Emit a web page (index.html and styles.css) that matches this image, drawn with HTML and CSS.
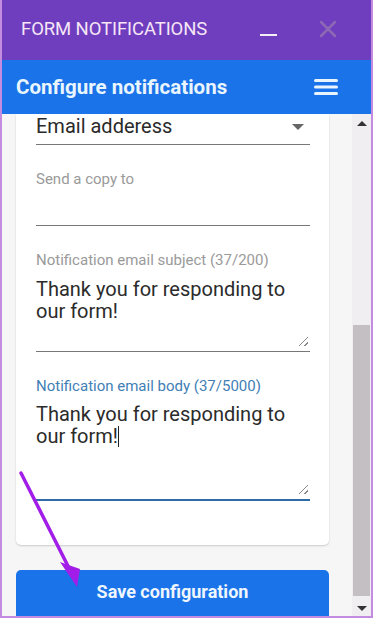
FILE: index.html
```html
<!DOCTYPE html>
<html lang="en">
<head>
  <meta charset="UTF-8" />
  <meta name="viewport" content="width=device-width, initial-scale=1" />
  <title>Form Notifications</title>
  <link rel="stylesheet" href="styles.css">
</head>
<body>
  <div class="window">
    <!-- Dialog title bar -->
    <div class="titlebar">
      <span class="title">FORM NOTIFICATIONS</span>
      <span class="minimize"></span>
      <svg class="close" width="18" height="18" viewBox="0 0 18 18">
        <path d="M2 2 L16 16 M16 2 L2 16" stroke="#8d68b4" stroke-width="2.5" stroke-linecap="round" />
      </svg>
    </div>

    <div class="appbar">
      <h1>Configure notifications</h1>
      <svg class="menu" width="24" height="18" viewBox="0 0 24 18">
        <rect x="0" y="1" width="24" height="3" rx="1.5" fill="#eaf4ff" />
        <rect x="0" y="7.5" width="24" height="3" rx="1.5" fill="#eaf4ff" />
        <rect x="0" y="14" width="24" height="3" rx="1.5" fill="#eaf4ff" />
      </svg>
    </div>

    <div class="main">
      <div class="pane">
        <div class="card">
          <div class="select">
            <span>Email adderess</span>
            <span class="caret-down"></span>
          </div>

          <div class="field">
            <label>Send a copy to</label>
            <div class="input"></div>
          </div>

          <div class="field">
            <label>Notification email subject (37/200)</label>
            <div class="textarea">
              Thank you for responding to our form!
              <span class="grip"></span>
            </div>
          </div>

          <div class="field focused">
            <label>Notification email body (37/5000)</label>
            <div class="textarea tall">
              Thank you for responding to our form!<span class="cursor"></span>
              <span class="grip"></span>
            </div>
          </div>
        </div>

        <button class="save">Save configuration</button>
      </div>

      <div class="scrollbar">
        <span class="arrow up"></span>
        <div class="track"><div class="thumb"></div></div>
        <span class="arrow down"></span>
      </div>
    </div>

    <!-- annotation arrow drawn over the dialog -->
    <svg class="pointer" width="100" height="140" viewBox="0 0 100 140">
      <path d="M21 23 L72 124" stroke="#a21ee8" stroke-width="3.5" stroke-linecap="round" />
      <polygon points="62,114 82,121 79,139" fill="#a21ee8" transform="translate(-2,-2)" />
    </svg>
  </div>
</body>
</html>
```

FILE: styles.css
```css
* {
  box-sizing: border-box;
}

body {
  margin: 0;
  font-family: Roboto, "Liberation Sans", Arial, sans-serif;
}

.window {
  position: relative;
  height: 618px;
  border: 2px solid #c38ce0;
  border-top: none;
  display: flex;
  flex-direction: column;
  overflow: hidden;
}

.titlebar {
  height: 60px;
  background: #6f3ebf;
  display: flex;
  align-items: center;
  padding: 0 0 2px 19px;
}

.title {
  color: #f6e6f6;
  font-size: 18.5px;
  letter-spacing: -0.1px;
  flex: 1;
}

.minimize {
  width: 17px;
  height: 2.5px;
  background: #f4ecf6;
  margin: 12px 42px 0 0;
}

.close {
  margin-right: 34px;
}

.appbar {
  height: 54px;
  background: #1a73e8;
  display: flex;
  align-items: center;
  justify-content: space-between;
  padding: 0 33px 0 14px;
}

.appbar h1 {
  margin: 0;
  color: #e9f5ff;
  font-size: 20.5px;
  font-weight: bold;
}

.main {
  flex: 1;
  display: flex;
  min-height: 0;
}

.pane {
  flex: 1;
  background: #f6f6f6;
  padding: 0 23px 0 14px;
  overflow: hidden;
}

.card {
  background: #fff;
  border-radius: 0 0 5px 5px;
  box-shadow: 0 1px 2px rgba(0, 0, 0, 0.18);
  padding: 0 19px 44px 20px;
}

.select {
  height: 31px;
  border-bottom: 1px solid #777;
  display: flex;
  align-items: center;
  justify-content: space-between;
  font-size: 20px;
  color: #2a2a2a;
  padding: 0 6px 7px 0;
}

.caret-down {
  width: 0;
  height: 0;
  border-left: 6px solid transparent;
  border-right: 6px solid transparent;
  border-top: 6px solid #666;
  margin-top: 2px;
}

.field {
  margin-top: 25px;
}

.field label {
  display: block;
  font-size: 15px;
  color: #9a9a9a;
  line-height: 18px;
}

.input {
  height: 38px;
  border-bottom: 1px solid #777;
}

.textarea {
  position: relative;
  font-size: 20px;
  line-height: 22px;
  color: #2b2b2b;
  padding: 9px 10px 0 0;
  height: 83px;
  border-bottom: 1px solid #777;
}

.textarea.tall {
  height: 106px;
  padding-top: 8px;
}

.focused label {
  color: #3f7fb5;
}

.focused .textarea {
  border-bottom: 2px solid #2e6ca6;
}

.cursor {
  display: inline-block;
  width: 1px;
  height: 21px;
  background: #222;
  vertical-align: -4px;
}

.grip {
  position: absolute;
  right: 2px;
  bottom: 5px;
  width: 9px;
  height: 9px;
  background: linear-gradient(135deg, transparent 45%, #888 45%, #888 55%, transparent 55%, transparent 75%, #888 75%, #888 85%, transparent 85%);
}

.save {
  display: block;
  width: 100%;
  height: 52px;
  margin-top: 25px;
  background: #1a73e8;
  border: none;
  border-radius: 5px;
  color: #eef6ff;
  font-family: Roboto, "Liberation Sans", Arial, sans-serif;
  font-size: 18px;
  font-weight: bold;
  padding-bottom: 10px;
}

.scrollbar {
  width: 19px;
  background: #f1eef1;
  display: flex;
  flex-direction: column;
  align-items: center;
}

.track {
  flex: 1;
  width: 100%;
  padding: 0 1px;
  display: flex;
  flex-direction: column;
  justify-content: flex-end;
}

.thumb {
  height: 271px;
  background: #c3bfc3;
  margin-bottom: 4px;
}

.arrow {
  width: 0;
  height: 0;
  border-left: 5px solid transparent;
  border-right: 5px solid transparent;
  margin: 7px 0;
}

.arrow.up {
  border-bottom: 5px solid #333;
}

.arrow.down {
  border-top: 5px solid #333;
  margin: 6px 0 5px;
}

.pointer {
  position: absolute;
  left: -2px;
  top: 450px;
  pointer-events: none;
}
```
